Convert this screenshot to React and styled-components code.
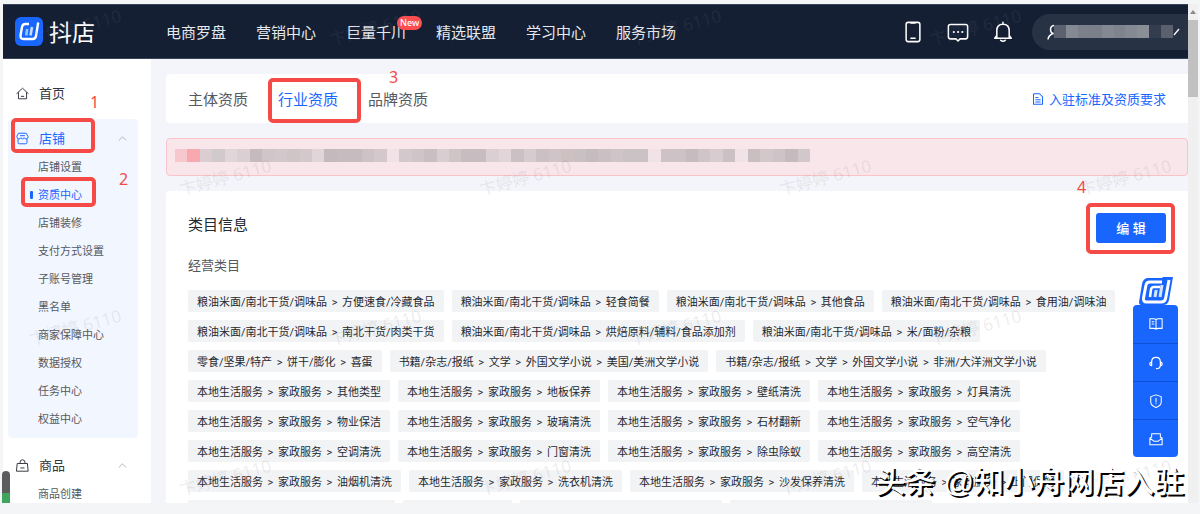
import React from "react";
import styled, { createGlobalStyle, css } from "styled-components";

const blue = "#1966ff";
const red = "#f54a45";

const GlobalStyle = createGlobalStyle`
  * { box-sizing: border-box; }
  body {
    margin: 0;
    background: #f4f5f7;
    font-family: "Noto Sans", "Noto Sans CJK SC", sans-serif;
    color: #252931;
    overflow: hidden;
  }
  button { font-family: inherit; border: 0; padding: 0; background: none; cursor: pointer; }
  a { text-decoration: none; color: inherit; }
  ul { list-style: none; margin: 0; padding: 0; }
  h2, h3 { margin: 0; font-weight: 400; }
`;

const Frame = styled.div`
  position: relative;
  height: 100vh;
  padding: 4px 2px 11px 3px;
  display: flex;
`;

const Page = styled.div`
  position: relative;
  flex: 1;
  min-width: 0;
  display: flex;
  flex-direction: column;
  overflow: hidden;
  background: #f4f5fa;
`;

const Header = styled.header`
  flex: none;
  height: 55px;
  display: flex;
  align-items: center;
  padding-left: 12px;
  background: #141f33;
  color: #e6e8ec;
  border-top: 1px solid #39435a;
  border-bottom: 1px solid #39435a;
`;

const Brand = styled.a`
  display: flex;
  align-items: center;
  gap: 6px;
  width: 151px;
  font-size: 23px;
  line-height: 32px;
  color: #fff;
`;

const TopNav = styled.nav`
  display: flex;
  gap: 30px;
  font-size: 15px;
  line-height: 24px;
`;

const TopLink = styled.a`
  position: relative;
  white-space: nowrap;
`;

const NewBadge = styled.span`
  position: absolute;
  left: 51px;
  top: -4px;
  padding: 0 3px;
  border-radius: 8px;
  background: #ff4d4f;
  color: #fff;
  font-size: 9px;
  line-height: 14px;
  font-weight: 500;
`;

const Tools = styled.div`
  margin-left: auto;
  display: flex;
  align-items: center;
  gap: 23px;
`;

const IconButton = styled.button`
  display: flex;
  color: #fff;
`;

const Account = styled.button`
  display: flex;
  align-items: center;
  width: 156px;
  height: 36px;
  padding: 0 8px 0 15px;
  margin-left: -5px;
  border-radius: 18px 0 0 18px;
  background: #283245;
  color: #fff;
`;

const Mosaic = styled.span`
  display: flex;
  flex: 1;
  height: 13px;
  max-width: ${(p) => p.$max};
`;

const Cell = styled.span`
  flex: 1;
  background: ${(p) => p.$color};
`;

const Body = styled.div`
  flex: 1;
  min-height: 0;
  display: flex;
`;

const Sidebar = styled.aside`
  flex: none;
  width: 148px;
  padding: 20px 13px 0 5px;
  background: #fff;
  overflow: hidden;
`;

const Group = styled.section`
  padding-bottom: 5px;
  border-radius: 4px;
  background: ${(p) => (p.$open ? "#f2f6ff" : "none")};
  margin-bottom: 8px;
`;

const GroupTitle = styled.button`
  display: flex;
  align-items: center;
  gap: 10px;
  width: 100%;
  height: ${(p) => (p.$home ? "24px" : "34px")};
  padding: 4px 11px 0 8px;
  margin-bottom: ${(p) => (p.$home ? "16px" : "0")};
  color: ${(p) => (p.$active ? blue : "#33363d")};
  font-size: 13px;
  line-height: 20px;

  svg:last-child:not(:first-child) { margin-left: auto; color: #a9adb5; }
`;

const SideItem = styled.a`
  position: relative;
  display: block;
  padding-left: 30px;
  font-size: 11px;
  line-height: 28px;
  color: ${(p) => (p.$active ? blue : "#565960")};

  ${(p) =>
    p.$active &&
    css`
      &::before {
        content: "";
        position: absolute;
        left: 22px;
        top: 10px;
        width: 3px;
        height: 8px;
        border-radius: 1px;
        background: ${blue};
      }
    `}
`;

const Main = styled.main`
  flex: 1;
  min-width: 0;
  padding: 15px 0 0 15px;
  display: flex;
  flex-direction: column;
  gap: 15px;
`;

const TabBar = styled.nav`
  flex: none;
  display: flex;
  align-items: center;
  gap: 30px;
  height: 49px;
  padding: 0 22px;
  border-radius: 4px 0 0 4px;
  background: #fff;
`;

const Tab = styled.a`
  font-size: 15px;
  line-height: 24px;
  color: ${(p) => (p.$active ? blue : "#565960")};
`;

const GuideLink = styled.a`
  margin-left: auto;
  display: flex;
  align-items: center;
  gap: 5px;
  font-size: 13px;
  line-height: 20px;
  color: ${blue};
`;

const Notice = styled.div`
  flex: none;
  display: flex;
  align-items: center;
  height: 38px;
  padding: 0 8px 3px;
  border: 1px solid #fbc2c9;
  border-radius: 4px;
  background: #f8e6ea;
`;

const Card = styled.section`
  flex: 1;
  min-height: 0;
  overflow: hidden;
  padding: 22px 22px 0;
  border-radius: 4px 0 0 0;
  background: #fff;
`;

const CardHead = styled.div`
  display: flex;
  justify-content: space-between;
  align-items: flex-start;
`;

const Title = styled.h2`
  font-size: 15px;
  line-height: 22px;
`;

const Subtitle = styled.h3`
  margin: 12px 0 15px;
  font-size: 13px;
  line-height: 20px;
  color: #565960;
`;

const EditButton = styled.button`
  width: 70px;
  height: 30px;
  border-radius: 3px;
  background: ${blue};
  color: #fff;
  font-size: 13px;
  line-height: 20px;
  font-weight: 500;
`;

const TagRow = styled.ul`
  display: flex;
  gap: 8px;
  margin-bottom: 8px;
`;

const Tag = styled.li`
  flex: none;
  display: flex;
  min-width: ${(p) => p.$min || "0"};
  height: 22px;
  padding: 0 9px;
  border-radius: 2px;
  background: #f2f3f5;
  font-family: Roboto, "Noto Sans CJK SC", sans-serif;
  font-size: 11px;
  line-height: 25px;
  white-space: nowrap;
`;

const Arrow = styled.span`
  width: 15px;
  text-align: center;
`;

const ScrollTrack = styled.div`
  flex: none;
  width: 10px;
  background: #f0f0f1;
  display: flex;
  flex-direction: column;
  align-items: center;
  gap: 6px;
  padding-top: 6px;
`;

const ScrollThumb = styled.div`
  width: 10px;
  height: 77px;
  background: #c1c1c1;
`;

const Dock = styled.aside`
  position: absolute;
  right: 22px;
  top: 276px;
  width: 45px;
  display: flex;
  flex-direction: column;
  align-items: center;
`;

const DockList = styled.div`
  width: 45px;
  border-radius: 4px;
  overflow: hidden;
  background: ${blue};
`;

const DockButton = styled.button`
  display: flex;
  align-items: center;
  justify-content: center;
  width: 100%;
  height: 38px;
  color: #fff;
  & + & { border-top: 1px solid #0f50d8; }
`;

const MarkBox = styled.span`
  position: absolute;
  left: ${(p) => p.$x}px;
  top: ${(p) => p.$y}px;
  width: ${(p) => p.$w}px;
  height: ${(p) => p.$h}px;
  border: 4px solid ${red};
  border-radius: 5px;
`;

const MarkNumber = styled.span`
  position: absolute;
  left: ${(p) => p.$x}px;
  top: ${(p) => p.$y}px;
  font-size: 16px;
  line-height: 20px;
  color: ${red};
`;

const Marks = styled.div`
  position: absolute;
  inset: 0;
  overflow: hidden;
  pointer-events: none;
`;

const MarkRow = styled.div`
  display: flex;
  gap: 200px;
  height: 150px;
  padding: 16px 0 0 ${(p) => (p.$shift ? "178px" : "28px")};
`;

const Watermark = styled.span`
  flex: none;
  width: 100px;
  height: 22px;
  font-size: 17px;
  line-height: 22px;
  white-space: nowrap;
  color: rgba(120, 126, 140, 0.14);
  transform: rotate(-15deg);
`;

const Signature = styled.div`
  position: absolute;
  right: 16px;
  bottom: 12px;
  font-family: "Liberation Sans", "Noto Sans CJK SC", sans-serif;
  font-size: 30px;
  line-height: 40px;
  font-weight: 500;
  white-space: nowrap;
  color: #fff;
  text-shadow: 2px 2px 0 #000;
`;

const LeftGauge = styled.div`
  position: absolute;
  left: 2px;
  bottom: 11px;
  width: 8px;
  height: 32px;
  border-radius: 4px 4px 0 0;
  background: linear-gradient(#5c5c5e 0 22px, #3fa55c 22px);
`;

const Stroke = ({ size = 16, children, w = 1.2, ...rest }) => (
  <svg width={size} height={size} viewBox="0 0 16 16" fill="none" stroke="currentColor"
    strokeWidth={w} strokeLinecap="round" strokeLinejoin="round" aria-hidden="true" {...rest}>
    {children}
  </svg>
);

const Logo = () => (
  <svg width="28" height="29" viewBox="0 0 28 29" fill="none" aria-hidden="true">
    <rect width="28" height="29" rx="6" fill={blue} />
    <path d="M14 7H10.500Q7.500 7 7 10L5.600 18Q5 22 8.500 22H17.500Q20.500 22 21 19L23.200 5.500" stroke="#fff" strokeWidth="2.400" />
    <path d="M11.200 18.500L12.200 12" stroke="#8fc4ff" strokeWidth="2.600" />
    <path d="M15.500 18.500L17 10" stroke="#c5deff" strokeWidth="2.600" />
  </svg>
);

const DockLogo = () => (
  <svg width="36" height="29" viewBox="0 0 36 29" fill="none" aria-hidden="true">
    <path d="M9 2H24L25 1H35L31 24Q30 29 25 29H3Q1 29 1 26L4 8Q5 3 9 2Z" fill={blue} />
    <path d="M24 6H12Q8.500 6 8 9L5.500 22Q5 26 8.500 26H23Q27 26 27.700 22L31 4" stroke="#fff" strokeWidth="3" />
    <path d="M22 11H16Q13.500 11 13 13.500L12 21" stroke="#fff" strokeWidth="2.500" />
    <path d="M17 21L18.200 14M22 21L24 9" stroke="#d5e5ff" strokeWidth="3" />
  </svg>
);

const Chevron = () => <Stroke size={9} w={1.6}><path d="M2 11L8 5L14 11" /></Stroke>;

const nav = ["电商罗盘", "营销中心", "巨量千川", "精选联盟", "学习中心", "服务市场"];
const shop = ["店铺设置", "资质中心", "店铺装修", "支付方式设置", "子账号管理", "黑名单", "商家保障中心", "数据授权", "任务中心", "权益中心"];
const food = "粮油米面/南北干货/调味品";
const books = "书籍/杂志/报纸 > 文学 > 外国文学小说";
const home = "本地生活服务 > 家政服务";
const rows = [
  [`${food} > 方便速食/冷藏食品`, `${food} > 轻食简餐`, `${food} > 其他食品`, `${food} > 食用油/调味油`],
  [`${food} > 南北干货/肉类干货`, `${food} > 烘焙原料/辅料/食品添加剂`, `${food} > 米/面粉/杂粮`],
  ["零食/坚果/特产 > 饼干/膨化 > 喜蛋", `${books} > 美国/美洲文学小说`, `${books} > 非洲/大洋洲文学小说`],
  ...[
    ["其他类型", "地板保养", "壁纸清洗", "灯具清洗"],
    ["物业保洁", "玻璃清洗", "石材翻新", "空气净化"],
    ["空调清洗", "门窗清洗", "除虫除蚁", "高空清洗"],
    ["油烟机清洗", "洗衣机清洗", "沙发保养清洗", "上门保姆"],
  ].map((r) => r.map((s) => `${home} > ${s}`)),
];
const pendingTags = ["207px", "109px", "202px", "202px"];
const noticeCells = "f6c8ce f8a9b0 dccdd1 d2c9cc e0d5d9 dccfd3 c5babd d0c6c9 d2c8cb cfc5c6 d3c9cc e2d5d9 c4b9bc c6bbbe c6bbbe cdc3c6 d4c8cc f0e2e7 d3c8cc cfc4c8 c9bec2 d8ced1 cfc4c6 c7bdc0 c7bdc0 dccfd4 e2d5d9 cbc0c4 d6cbcf cbc1c4 d0c4c8 cfc0c2 c9c0c3 c6bcbf cabfc2 cfc4c7 cbc2c5 cbc2c5 f0e2e7 cdc2c6 cdc2c6 c6bcbf cfc5c8 d8ccd0 cbc1c4 f0e2e7 c9bec2 d3c7ca cec3c6 c5bbbe d2c8cb".split(" ");
const accountCells = "5b616e 858993 7c808b 7a7f8a 848892 7f838d 858993 8a8e97 343d4e 5a606d".split(" ");

const CategoryTag = ({ path }) => (
  <Tag>
    {path.split(" > ").map((part, i) => (
      <React.Fragment key={i}>
        {i > 0 && <Arrow>&gt;</Arrow>}
        <span>{part}</span>
      </React.Fragment>
    ))}
  </Tag>
);

export default function App() {
  return (
    <Frame>
      <GlobalStyle />
      <Page>
        <Header>
          <Brand href="#"><Logo />抖店</Brand>
          <TopNav>
            {nav.map((n) => (
              <TopLink href="#" key={n}>{n}{n === "巨量千川" && <NewBadge>New</NewBadge>}</TopLink>
            ))}
          </TopNav>
          <Tools>
            <IconButton aria-label="手机">
              <Stroke size={22} w={1.1}><rect x="3" y="1" width="10" height="14" rx="1.500" /><path d="M6.500 12.500H9.500M6.500 1.500H9.500" /></Stroke>
            </IconButton>
            <IconButton aria-label="消息">
              <Stroke size={22} w={1.1}><path d="M2.500 2.500H13.500Q15 2.500 15 4V11.500Q15 13 13.500 13H9.500L8 14.500L6.500 13H2.500Q1 13 1 11.500V4Q1 2.500 2.500 2.500Z" /><path d="M4.900 8H5M8 8H8.100M11.100 8H11.200" strokeWidth="1.500" /></Stroke>
            </IconButton>
            <IconButton aria-label="通知">
              <Stroke size={22} w={1.1}><path d="M8 1V2M3.500 12V7Q3.500 2.300 8 2.300T12.500 7V12M2 12.500L3.500 10.500M14 12.500L12.500 10.500M2 12.500H14M6.300 14Q8 15.500 9.700 14" /></Stroke>
            </IconButton>
            <Account aria-label="账号">
              <svg width="7" height="16" viewBox="0 0 7 16" fill="none" stroke="currentColor" strokeWidth="1.500" aria-hidden="true">
                <path d="M7 1.500Q3.500 2 3.500 5.500T6.500 9.500Q1.500 11 1 15.500" />
              </svg>
              <Mosaic $max="124px">{accountCells.map((c, i) => <Cell key={i} $color={`#${c}`} />)}</Mosaic>
              <svg width="7" height="8" viewBox="0 0 7 8" fill="none" stroke="currentColor" strokeWidth="1.300" aria-hidden="true"><path d="M1 7L6 1" /></svg>
            </Account>
          </Tools>
        </Header>
        <Body>
          <Sidebar>
            <GroupTitle $home>
              <Stroke size={13}><path d="M1 8L8 1.500L15 8M3 7V14.500H13V7M6.500 11.500H9.500" /></Stroke>首页
            </GroupTitle>
            <Group $open>
              <GroupTitle $active>
                <Stroke size={13}><path d="M3.500 1.500H12.500L15 6Q14.500 8.500 12.500 8.500T10 7Q9.500 8.500 8 8.500T6 7Q5.500 8.500 3.500 8.500T1 6ZM2.500 9V13Q2.500 14.500 4 14.500H12Q13.500 14.500 13.500 13V9M5.500 4.500H10.500" /></Stroke>
                店铺<Chevron />
              </GroupTitle>
              {shop.map((s) => <SideItem href="#" key={s} $active={s === "资质中心"}>{s}</SideItem>)}
            </Group>
            <Group>
              <GroupTitle>
                <Stroke size={13}><path d="M2 5.500H14L15 15H1ZM5 5V4Q5 1 8 1T11 4V5M6 11H10" /></Stroke>
                商品<Chevron />
              </GroupTitle>
              <SideItem href="#">商品创建</SideItem>
            </Group>
          </Sidebar>
          <Main>
            <TabBar>
              <Tab href="#">主体资质</Tab>
              <Tab href="#" $active>行业资质</Tab>
              <Tab href="#">品牌资质</Tab>
              <GuideLink href="#">
                <Stroke size={12} w={1.4}><path d="M3 1H10L14 5V15H2V2Q2 1 3 1ZM5 6H8M5 9H11M5 12H11" /></Stroke>
                入驻标准及资质要求
              </GuideLink>
            </TabBar>
            <Notice><Mosaic $max="635px">{noticeCells.map((c, i) => <Cell key={i} $color={`#${c}`} />)}</Mosaic></Notice>
            <Card>
              <CardHead>
                <Title>类目信息</Title>
                <EditButton>编 辑</EditButton>
              </CardHead>
              <Subtitle>经营类目</Subtitle>
              {rows.map((r, i) => (
                <TagRow key={i}>{r.map((t) => <CategoryTag key={t} path={t} />)}</TagRow>
              ))}
              <TagRow>{pendingTags.map((w, i) => <Tag key={i} $min={w} />)}</TagRow>
            </Card>
          </Main>
        </Body>
      </Page>
      <ScrollTrack>
        <svg width="6" height="4" viewBox="0 0 6 4" aria-hidden="true"><path d="M0 4L3 0L6 4Z" fill="#8b8b8b" /></svg>
        <ScrollThumb />
      </ScrollTrack>
      <Dock>
        <DockLogo />
        <DockList>
          <DockButton aria-label="文档"><Stroke size={14}><path d="M8 3Q7 2 5.500 2H1V13H5.500Q7 13 8 14Q9 13 10.500 13H15V2H10.500Q9 2 8 3V14M3.500 5.500H5.500M3.500 8H5.500" /></Stroke></DockButton>
          <DockButton aria-label="客服"><Stroke size={14} w={1.4}><path d="M3 7Q3 1.500 8 1.500T13 7M3 7Q1 7 1 9T3 11ZM13 7Q15 7 15 9T13 11ZM13 11Q12.500 14.500 8.500 14.500" /></Stroke></DockButton>
          <DockButton aria-label="保障"><Stroke size={14}><path d="M8 1L14 3V9Q14 13 8 15.500Q2 13 2 9V3ZM8 5V9M8 11V11.200" /></Stroke></DockButton>
          <DockButton aria-label="反馈"><Stroke size={14}><path d="M3 6V2H13V6M1 7L5.500 10.500H10.500L15 7V14.500H1ZM1 7L3 5.500M15 7L13 5.500" /></Stroke></DockButton>
        </DockList>
      </Dock>
      <Marks>
        {[0, 1, 2, 3].map((r) => (
          <MarkRow key={r} $shift={r % 2 === 1}>
            {[0, 1, 2, 3].map((c) => <Watermark key={c}>卞婷婷 6110</Watermark>)}
          </MarkRow>
        ))}
        <MarkBox $x={11} $y={118} $w={84} $h={35} />
        <MarkBox $x={21} $y={177} $w={75} $h={30} />
        <MarkBox $x={268} $y={78} $w={93} $h={45} />
        <MarkBox $x={1086} $y={203} $w={89} $h={51} />
        <MarkNumber $x={90} $y={92}>1</MarkNumber>
        <MarkNumber $x={119} $y={169}>2</MarkNumber>
        <MarkNumber $x={389} $y={67}>3</MarkNumber>
        <MarkNumber $x={1077} $y={177}>4</MarkNumber>
        <LeftGauge />
        <Signature>头条 @知小舟网店入驻</Signature>
      </Marks>
    </Frame>
  );
}
